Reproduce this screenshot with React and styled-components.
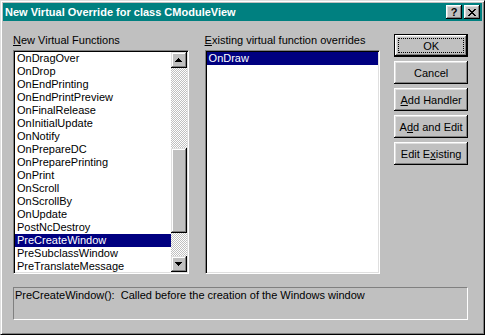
import styled, { createGlobalStyle } from "styled-components";

const GlobalStyle = createGlobalStyle`
  html, body {
    margin: 0;
    padding: 0;
    background: #c0c0c0;
  }
  * {
    box-sizing: border-box;
  }
`;

const functions = [
  "OnDragOver",
  "OnDrop",
  "OnEndPrinting",
  "OnEndPrintPreview",
  "OnFinalRelease",
  "OnInitialUpdate",
  "OnNotify",
  "OnPrepareDC",
  "OnPreparePrinting",
  "OnPrint",
  "OnScroll",
  "OnScrollBy",
  "OnUpdate",
  "PostNcDestroy",
  "PreCreateWindow",
  "PreSubclassWindow",
  "PreTranslateMessage",
];

const App = () => {
  return (
    <>
      <GlobalStyle />
      <Window>
        <TitleBar>
          <Title>New Virtual Override for class CModuleView</Title>
          <CaptionButtons>
            <CaptionButton>?</CaptionButton>
            <CaptionButton>
              <svg width="8" height="7" viewBox="0 0 8 7">
                <path
                  d="M0 0h2v1h1v1h2V1h1V0h2v1H7v1H6v1H5v1h1v1h1v1h1v1H6V6H5V5H3v1H2v1H0V6h1V5h1V4h1V3H2V2H1V1H0z"
                  fill="#000"
                />
              </svg>
            </CaptionButton>
          </CaptionButtons>
        </TitleBar>

        <Body>
          <MainRow>
            <Column>
              <Label>
                <u>N</u>ew Virtual Functions
              </Label>
              <ListBox>
                <Items>
                  {functions.map((name) => (
                    <Item key={name} selected={name === "PreCreateWindow"}>
                      {name}
                    </Item>
                  ))}
                </Items>
                <ScrollBar>
                  <ArrowButton>
                    <svg width="7" height="4" viewBox="0 0 7 4">
                      <path d="M3 0h1v1h1v1h1v1h1v1H0V3h1V2h1V1h1z" fill="#000" />
                    </svg>
                  </ArrowButton>
                  <Track size={80} />
                  <Thumb />
                  <Track />
                  <ArrowButton>
                    <svg width="7" height="4" viewBox="0 0 7 4">
                      <path d="M0 0h7v1H6v1H5v1H4v1H3V3H2V2H1V1H0z" fill="#000" />
                    </svg>
                  </ArrowButton>
                </ScrollBar>
              </ListBox>
            </Column>

            <Column>
              <Label>
                <u>E</u>xisting virtual function overrides
              </Label>
              <ListBox>
                <Items>
                  <Item selected>OnDraw</Item>
                </Items>
              </ListBox>
            </Column>

            <ButtonColumn>
              <Button primary>OK</Button>
              <Button>Cancel</Button>
              <Button>
                <u>A</u>dd Handler
              </Button>
              <Button>
                A<u>d</u>d and Edit
              </Button>
              <Button>
                Edit E<u>x</u>isting
              </Button>
            </ButtonColumn>
          </MainRow>

          <StatusBox>
            PreCreateWindow():&nbsp; Called before the creation of the Windows window
          </StatusBox>
        </Body>
      </Window>
    </>
  );
};

const Window = styled.div`
  width: 485px;
  height: 335px;
  display: flex;
  flex-direction: column;
  background: #c0c0c0;
  border: 1px solid;
  border-color: #dfdfdf #000 #000 #dfdfdf;
  box-shadow: inset 1px 1px #fff, inset -1px -1px #808080;
  padding: 2px;
  font-family: "Liberation Sans", Arial, sans-serif;
  font-size: 11px;
  color: #000;
`;

const TitleBar = styled.div`
  height: 18px;
  flex: none;
  display: flex;
  align-items: center;
  justify-content: space-between;
  padding: 0 2px 0 2px;
  background: #008080;
`;

const Title = styled.div`
  color: #fff;
  font-weight: bold;
  font-size: 11px;
  white-space: nowrap;
`;

const CaptionButtons = styled.div`
  display: flex;
  gap: 2px;
`;

const CaptionButton = styled.div`
  width: 16px;
  height: 14px;
  display: flex;
  align-items: center;
  justify-content: center;
  background: #c0c0c0;
  box-shadow: inset -1px -1px #000, inset 1px 1px #fff, inset -2px -2px #808080,
    inset 2px 2px #dfdfdf;
  font-weight: bold;
  font-size: 11px;
  line-height: 14px;
`;

const Body = styled.div`
  flex: 1;
  display: flex;
  flex-direction: column;
  padding: 13px 14px 0 10px;
`;

const MainRow = styled.div`
  display: flex;
  align-items: flex-start;
`;

const Column = styled.div`
  width: 176px;
  display: flex;
  flex-direction: column;
  margin-right: 16px;

  & + & {
    margin-right: 14px;
  }
`;

const Label = styled.div`
  height: 13px;
  line-height: 13px;
  margin-bottom: 3px;
  white-space: nowrap;
`;

const ListBox = styled.div`
  height: 224px;
  display: flex;
  background: #fff;
  border: 1px solid;
  border-color: #808080 #fff #fff #808080;
  box-shadow: inset 1px 1px #000, inset -1px -1px #dfdfdf;
  padding: 1px;
  overflow: hidden;
`;

const Items = styled.div`
  flex: 1;
  min-width: 0;
  overflow: hidden;
`;

const Item = styled.div`
  height: 13px;
  line-height: 13px;
  padding-left: 2px;
  white-space: nowrap;
  background: ${({ selected }) => (selected ? "#000080" : "transparent")};
  color: ${({ selected }) => (selected ? "#fff" : "#000")};
`;

const ScrollBar = styled.div`
  width: 16px;
  flex: none;
  display: flex;
  flex-direction: column;
`;

const raised = `
  background: #c0c0c0;
  box-shadow: inset -1px -1px #000, inset 1px 1px #dfdfdf, inset -2px -2px #808080,
    inset 2px 2px #fff;
`;

const ArrowButton = styled.div`
  height: 16px;
  flex: none;
  display: flex;
  align-items: center;
  justify-content: center;
  ${raised}
`;

const Track = styled.div`
  flex: ${({ size }) => (size ? `0 0 ${size}px` : "1")};
  background: repeating-conic-gradient(#fff 0 25%, #c0c0c0 0 50%) 0 0 / 2px 2px;
`;

const Thumb = styled.div`
  height: 85px;
  flex: none;
  ${raised}
`;

const ButtonColumn = styled.div`
  width: 74px;
  display: flex;
  flex-direction: column;
  gap: 4px;
`;

const Button = styled.div`
  height: 23px;
  display: flex;
  align-items: center;
  justify-content: center;
  white-space: nowrap;
  background: #c0c0c0;
  border: ${({ primary }) => (primary ? "1px solid #000" : "none")};
  box-shadow: inset -1px -1px #000, inset 1px 1px #fff, inset -2px -2px #808080,
    inset 2px 2px #dfdfdf;
  outline: ${({ primary }) => (primary ? "1px dotted #000" : "none")};
  outline-offset: -5px;
`;

const StatusBox = styled.div`
  margin-top: 13px;
  height: 33px;
  border: 1px solid;
  border-color: #808080 #fff #fff #808080;
  padding: 1px 1px 0 1px;
  line-height: 13px;
  white-space: nowrap;
`;

export default App;
